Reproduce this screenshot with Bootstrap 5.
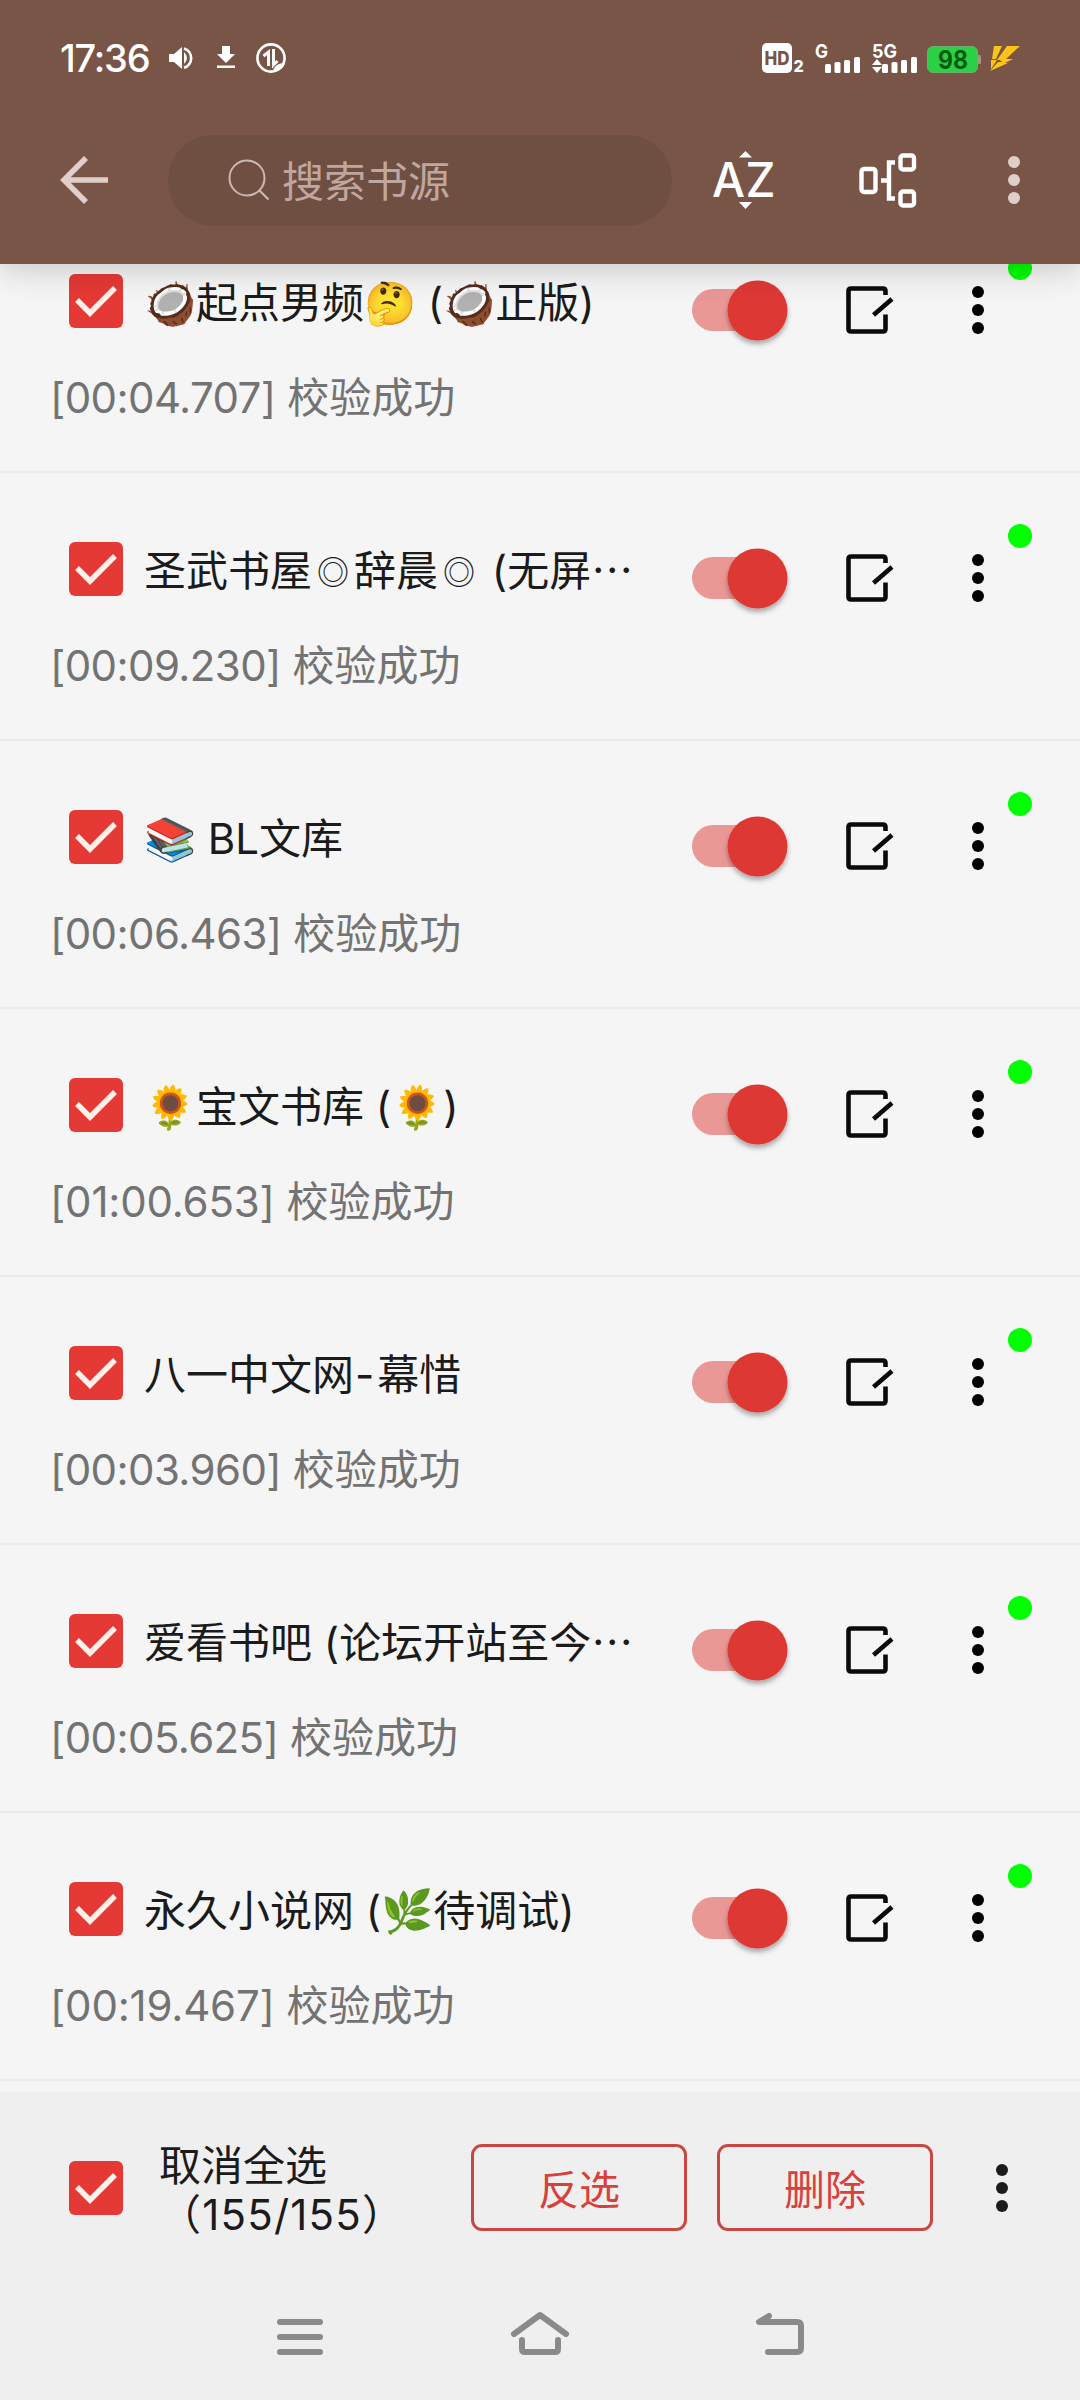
<!DOCTYPE html>
<html lang="zh-CN">
<head>
<meta charset="utf-8">
<meta name="viewport" content="width=device-width, initial-scale=1">
<title>书源管理</title>
<link href="https://cdn.jsdelivr.net/npm/bootstrap@5.3.0/dist/css/bootstrap.min.css" rel="stylesheet">
<style>
body{width:1080px;height:2400px;overflow:hidden;background:#f5f5f5;font-family:Inter,"Noto Sans CJK SC",sans-serif;font-size:42px;line-height:50px;color:#1b1b1b}
svg{display:block;flex:none}
.app-head{height:264px;background:#795547;box-shadow:0 4px 32px rgba(0,0,0,.2);z-index:2;flex:none}
.status-line{height:116px;padding:0 60px;color:#fff}
.clock{font-size:38px;font-weight:500;letter-spacing:-1.2px;width:108px;white-space:nowrap}
.tool-line{height:128px;padding-left:60px}
.search-pill{width:504px;height:91px;background:#704f43;color:#bfa79f;margin-left:60px;padding-left:60px}
.search-pill span{margin:3px 0 0 12px}
.sort-icon{margin-left:41px}
.group-icon{margin-left:84px}
.more-icon{margin-left:91px}
.source-list{margin-top:-59px;height:1887px;overflow:hidden;flex:none}
.source-item{height:268px;border-bottom:2px solid #ebebeb;padding:67px 0 0 50px}
.tick{width:54px;height:54px;background:#e53935;border-radius:6px}
.source-item .tick{margin:2px 0 0 19px}
.source-name{width:496px;margin:6px 0 0 21px;white-space:nowrap;height:50px}
.toggle{width:104px;height:74px;margin:8px 0 0 52px}
.edit-icon{margin:14px 0 0 50px}
.row-dots{margin:14px 0 0 78px}
.source-msg{color:#737373;height:50px;margin-top:19px;white-space:nowrap}
.source-msg span{letter-spacing:-.6px}
.source-msg .has-one{letter-spacing:-.2px}
.ring{display:inline-block;width:42px;text-align:center;font-size:32px;line-height:40px;vertical-align:2px}
.dash{letter-spacing:3px;margin-left:1px}
.live-dot{width:24px;height:24px;border-radius:50%;background:#0f0;right:48px;top:51px}
.select-bar{height:188px;background:#efefef;padding:3px 0 0 69px;flex:none}
.select-bar .btn{--bs-btn-color:#d9403b;--bs-btn-border-color:#c94743;width:216px;height:87px;border-width:3px;border-radius:11px;font-size:41px;line-height:50px;padding:5px 0 0}
.sel-text{width:312px;margin:4px 0 0 36px;line-height:49px;white-space:nowrap}
.sel-count{letter-spacing:1.2px}
.nav-line{height:120px;background:#efefef;padding:0 275px;flex:none}
</style>
<script src="https://cdn.jsdelivr.net/npm/bootstrap@5.3.0/dist/js/bootstrap.bundle.min.js"></script>
</head>
<body class="d-flex flex-column">
<svg width="0" height="0" class="position-absolute">
<symbol id="tick" viewBox="0 0 54 54"><path d="M8 26 21 39 46 14" fill="none" stroke="#fff0ea" stroke-width="5.5"/></symbol>
<symbol id="toggle" viewBox="0 0 104 74"><rect x="0" y="9" width="84" height="42" rx="21" fill="#ea9895"/><circle cx="65.5" cy="30.500" r="30" fill="#de3936" filter="url(#thumbShade)"/></symbol>
<filter id="thumbShade" x="-30%" y="-30%" width="160%" height="160%"><feDropShadow dx="0" dy="3.500" stdDeviation="2.500" flood-color="#000" flood-opacity=".32"/></filter>
<symbol id="edit" viewBox="0 0 48 48"><path d="M39.500 9V5Q39.500 2.500 37 2.500H5Q2.500 2.500 2.500 5V43Q2.500 45.500 5 45.500H37Q39.500 45.500 39.500 43V28.500M27.500 29 46 13" fill="none" stroke="#0a0a0a" stroke-width="4.600"/></symbol>
<symbol id="dots" viewBox="0 0 12 48"><circle cx="6" cy="6" r="6"/><circle cx="6" cy="24" r="6"/><circle cx="6" cy="42" r="6"/></symbol>
</svg>
<header class="app-head position-relative">
<div class="status-line d-flex align-items-center">
<span class="clock">17:36</span>
<svg width="134" height="32" viewBox="168 42 134 32" fill="#fff"><path d="M169 54h5l8-7v22l-8-7h-5z"/><path d="M184 52q6 6 0 12z"/><path d="M184 48.500a10 10 0 0 1 0 19.200" fill="none" stroke="#fff" stroke-width="2.600"/><path d="M222 46h8v8h5l-9 9-9-9h5zM217 65.500h18v2.500h-18z"/><circle cx="271" cy="58" r="13.600" fill="none" stroke="#fff" stroke-width="2.600"/><path d="M268.500 66V52l-5 4M273.500 49v16l4-4" fill="none" stroke="#fff" stroke-width="3"/><path d="M273 71q2-8 12-8-2 8-12 8z"/></svg>
<svg class="ms-auto" width="258" height="34" viewBox="762 41 258 34" fill="#fff"><rect x="762" y="43" width="30" height="30" rx="5"/><text x="764.500" y="65" font-size="18.500" font-weight="800" fill="#795547" textLength="25" lengthAdjust="spacingAndGlyphs">HD</text><text x="793.500" y="72" font-size="16" font-weight="800">2</text><text x="815" y="57.500" font-size="19" font-weight="700" textLength="13" lengthAdjust="spacingAndGlyphs">G</text><text x="872" y="57.500" font-size="19" font-weight="700" textLength="25" lengthAdjust="spacingAndGlyphs">5G</text>
<rect x="825" y="64" width="6" height="9" rx="1.500"/><rect x="834.500" y="62" width="6" height="11" rx="1.500"/><rect x="844" y="60" width="6" height="13" rx="1.500"/><rect x="854" y="57" width="6" height="16" rx="1.500"/>
<path d="M872 65l5-6 5 6zM872 67h10l-5 6z"/><rect x="882" y="64" width="6" height="9" rx="1.500"/><rect x="891.500" y="62" width="6" height="11" rx="1.500"/><rect x="901" y="60" width="6" height="13" rx="1.500"/><rect x="911" y="57" width="6" height="16" rx="1.500"/>
<path d="M978 55h1.500q1.500 0 1.500 1.500v6q0 1.500-1.500 1.500H978z" fill="#a59289"/><rect x="927.500" y="46.500" width="50" height="26" rx="5.500" fill="#2bd145" stroke="#6fae68"/><text x="938" y="69" font-size="25" font-weight="700" fill="#075a12" textLength="30" lengthAdjust="spacingAndGlyphs">98</text>
<path d="M994 46h8l-6 13h-4zM991 60h6l-6 9zM1007 46h13l-14 13h7l-8 4h3l-18 8 8-9h4l-2-2h-3z" fill="#fcc419"/></svg>
</div>
<div class="tool-line d-flex align-items-center">
<svg width="48" height="48" viewBox="0 0 48 48"><path d="M48 24H4M26 2 4 24 26 46" fill="none" stroke="#e0cfcb" stroke-width="5.600"/></svg>
<div class="search-pill rounded-pill d-flex align-items-center"><svg width="42" height="42" viewBox="228 160 42 42"><path d="M259.500 191.500 268.500 200.500" stroke="#cbb8b0" stroke-width="2.200"/><circle cx="247" cy="179" r="17.500" fill="none" stroke="#cbb8b0" stroke-width="2"/></svg><span>搜索书源</span></div>
<svg class="sort-icon" width="62" height="60" viewBox="713 150 62 60" fill="#fff"><path d="M739 157.500l6.500-6.500 6.500 6.500zM739 202h13l-6.500 7z"/><text x="712" y="197" font-size="47.500" font-weight="500" textLength="33" lengthAdjust="spacingAndGlyphs">A</text><text x="745.500" y="197" font-size="47.500" font-weight="500" textLength="30" lengthAdjust="spacingAndGlyphs">Z</text></svg>
<svg class="group-icon" width="58" height="56" viewBox="859 151 58 56" fill="none" stroke="#fff" stroke-width="4.400"><rect x="861.500" y="168" width="14" height="23" rx="2.500"/><rect x="900.500" y="154.500" width="13.500" height="14" rx="2.500"/><rect x="900.500" y="190.500" width="13.500" height="14" rx="2.500"/><path d="M895 161.500h-6v36h6M881 179.500h8"/></svg>
<svg class="more-icon" width="12" height="48" fill="#dfcfc9"><use href="#dots"/></svg>
</div>
</header>
<main class="source-list" id="list"></main>
<section class="select-bar d-flex align-items-center">
<svg class="tick"><use href="#tick"/></svg>
<div class="sel-text">取消全选<br><span class="sel-count">（155/155）</span></div>
<div class="d-flex" style="gap:30px"><button class="btn btn-outline-danger">反选</button><button class="btn btn-outline-danger">删除</button></div>
<svg style="margin-left:63px" width="12" height="48" fill="#1b1b1b"><use href="#dots"/></svg>
</section>
<nav class="nav-line d-flex justify-content-between">
<svg width="50" height="110" viewBox="275 2280 50 110" stroke="#8a8a8a" stroke-width="6" stroke-linecap="round"><path d="M280 2322h40M280 2337h40M280 2352h40"/></svg>
<svg width="60" height="110" viewBox="510 2280 60 110" fill="none" stroke="#8a8a8a" stroke-width="6" stroke-linecap="round" stroke-linejoin="round"><path d="M514 2334 540 2315 566 2334M522 2340V2349Q522 2352 525 2352H555Q558 2352 558 2349V2340"/></svg>
<svg width="50" height="110" viewBox="755 2280 50 110" fill="none" stroke="#8a8a8a" stroke-width="6" stroke-linecap="round" stroke-linejoin="round"><path d="M769 2316 759 2322H797Q801 2322 801 2326V2348Q801 2352 797 2352H768"/></svg>
</nav>
<script>
const ring='<span class="ring">◎</span>';
const rows=[["🥥起点男频🤔 (🥥正版)","00:04.707"],[`圣武书屋${ring}辞晨${ring} (无屏⋯`,"00:09.230"],["📚 BL文库","00:06.463"],["🌻宝文书库 (🌻)","01:00.653"],['八一中文网<span class="dash">-</span>幕惜',"00:03.960"],["爱看书吧 (论坛开站至今⋯","00:05.625"],["永久小说网 (🌿待调试)","00:19.467"]];
document.getElementById("list").innerHTML=rows.map(r=>`<article class="source-item position-relative"><div class="d-flex align-items-start"><svg class="tick"><use href="#tick"/></svg><div class="source-name">${r[0]}</div><svg class="toggle"><use href="#toggle"/></svg><svg class="edit-icon" width="48" height="48"><use href="#edit"/></svg><svg class="row-dots" width="12" height="48"><use href="#dots"/></svg></div><div class="source-msg"><span class="${r[1].includes("1")?"has-one":""}">[${r[1]}]</span> 校验成功</div><span class="live-dot position-absolute"></span></article>`).join("");
</script>
</body>
</html>
